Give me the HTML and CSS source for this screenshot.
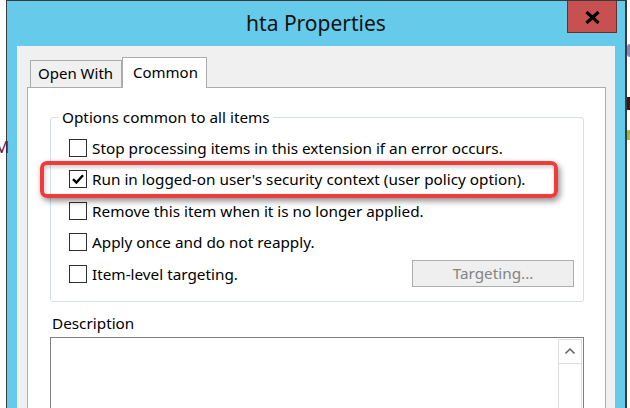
FILE: index.html
```html
<!DOCTYPE html>
<html>
<head>
<meta charset="utf-8">
<link rel="stylesheet" href="styles.css">
</head>
<body>
<div class="desktop">
  <span class="frag-m">M</span>
  <i class="frag frag-a"></i>
  <i class="frag frag-b"></i>
  <i class="frag frag-c"></i>
  <div class="window">
    <div class="titlebar">
      <span class="title">hta Properties</span>
      <div class="close">
        <svg width="15" height="13" viewBox="0 0 15 13"><path d="M1.5 1 L13.5 12 M13.5 1 L1.5 12" stroke="#000" stroke-width="3.2" fill="none"/></svg>
      </div>
    </div>
    <div class="client">
      <div class="tabs">
        <div class="tab">Open With</div>
        <div class="tab active">Common</div>
      </div>
      <div class="panel">
        <fieldset class="group">
          <legend>Options common to all items</legend>
          <div class="row"><span class="cb"></span><span>Stop processing items in this extension if an error occurs.</span></div>
          <div class="row"><span class="cb"><svg width="16" height="16" viewBox="0 0 16 16"><path d="M3 8.2 L6.4 11.6 L13 4.2" stroke="#000" stroke-width="2.4" fill="none"/></svg></span><span>Run in logged-on user's security context (user policy option).</span></div>
          <div class="row"><span class="cb"></span><span>Remove this item when it is no longer applied.</span></div>
          <div class="row"><span class="cb"></span><span>Apply once and do not reapply.</span></div>
          <div class="row"><span class="cb"></span><span>Item-level targeting.</span><span class="btn">Targeting...</span></div>
        </fieldset>
        <div class="desc-label">Description</div>
        <div class="desc">
          <div class="scroll">
            <div class="up"><svg width="12" height="8" viewBox="0 0 12 8"><path d="M1.5 6.5 L6 2 L10.5 6.5" stroke="#606060" stroke-width="1.5" fill="none"/></svg></div>
          </div>
        </div>
      </div>
    </div>
  </div>
  <div class="highlight"></div>
</div>
</body>
</html>
```
FILE: styles.css
```css
* { box-sizing: border-box; }
body { margin: 0; background: #fff; font-family: "Noto Sans", "Open Sans", sans-serif; color: #000; }
.desktop { position: relative; width: 630px; height: 408px; overflow: hidden; background: #fff; }
.frag-m { position: absolute; left: -6px; top: 135px; font-size: 17px; color: #5e1a46; }
.frag { position: absolute; left: 627px; width: 3px; display: block; }
.frag-a { top: 44px; height: 13px; background: #8e80c4; border-radius: 3px 0 0 3px; }
.frag-b { top: 97px; height: 13px; background: #3c1414; }
.frag-c { top: 130px; height: 10px; background: #a4b84a; }
.window { margin-left: 6px; width: 621px; height: 440px; border: 1px solid #3a3a3a; border-right-width: 2px; background: #66cbea; padding: 0 10px; display: flex; flex-direction: column; }
.titlebar { height: 45px; margin: 0 -10px; position: relative; display: flex; align-items: center; justify-content: center; }
.title { font-size: 21px; line-height: 45px; color: #111; }
.close { position: absolute; top: 0; right: 8px; width: 50px; height: 32px; background: #c75050; border: 1px solid #6b2e2e; border-top: 0; display: flex; align-items: center; justify-content: center; padding-top: 1px; }
.client { flex: 1; background: #f0f0f0; padding: 11px 9px 0 10px; }
.tabs { display: flex; align-items: flex-end; height: 30px; padding-left: 3px; }
.tab { width: 92px; height: 27px; border: 1px solid #acacac; border-bottom: 0; padding-left: 7px; font-size: 15px; line-height: 25px; background: #f0f0f0; white-space: nowrap; }
.tab.active { width: 85px; height: 31px; margin-bottom: -1px; background: #fff; position: relative; z-index: 1; padding-left: 10px; line-height: 28px; }
.panel { height: 400px; background: #fff; border: 1px solid #acacac; padding: 19px 21px 0 22px; }
.group { margin: 0; border: 1px solid #d5dfe5; border-radius: 3px; padding: 5px 9px 11px 0; min-width: 0; }
.group legend { margin-left: 8px; padding: 0 3px; font-size: 15.3px; line-height: 20px; }
.row { display: flex; align-items: center; height: 31.5px; padding-left: 18px; font-size: 15.3px; white-space: nowrap; }
.cb { flex: none; width: 18px; height: 18px; border: 1px solid #2e2e2e; background: #fff; margin-right: 5px; display: flex; align-items: center; justify-content: center; }
.btn { margin-left: auto; width: 162px; height: 27px; border: 1px solid #adadad; background: #efefef; color: #838383; font-size: 15.3px; line-height: 25px; text-align: center; }
.desc-label { margin-top: 11px; padding-left: 2px; font-size: 15.3px; line-height: 20px; }
.desc { margin-top: 4px; height: 120px; border: 1px solid #7f7f7f; padding: 1px; display: flex; justify-content: flex-end; }
.scroll { width: 24px; border: 1px solid #dedede; background: #fff; }
.up { height: 24px; border-bottom: 1px solid #dedede; display: flex; align-items: center; justify-content: center; }
.highlight { position: absolute; left: 40px; top: 161px; width: 518px; height: 37px; border: 4.5px solid #f03b3b; border-radius: 7px; box-shadow: 2px 3px 6px rgba(0,0,0,0.45), inset 1px 2px 4px rgba(0,0,0,0.22); }
```
